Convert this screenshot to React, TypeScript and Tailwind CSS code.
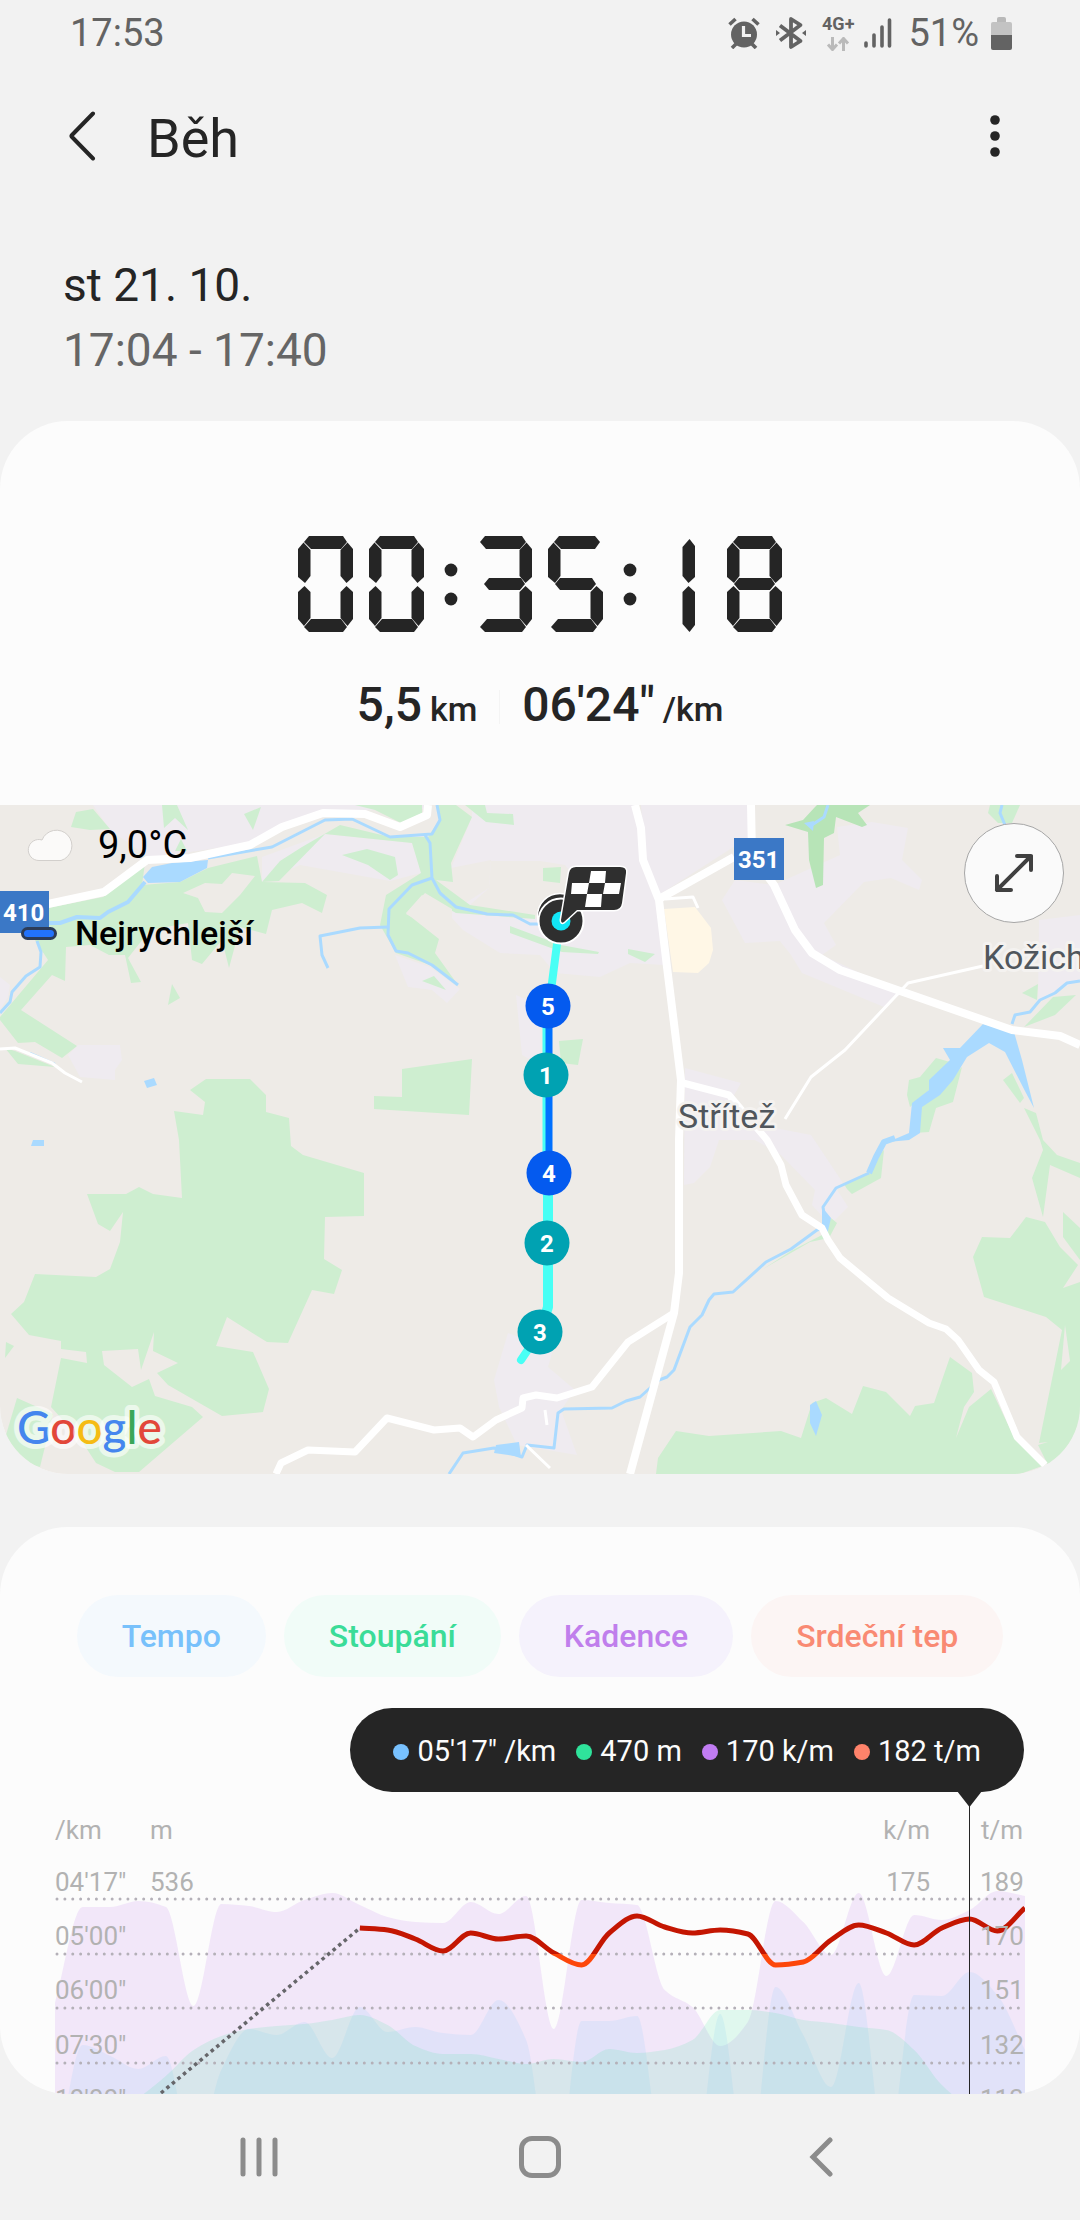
import type { ReactNode } from 'react';

const STEP = 970 / 35;
const CHART_LEFT = 55;

// Vertical positions of the samples, one every STEP units
const CADENCE = [
  203, 107, 107, 101, 107, 206, 104, 106, 112, 100, 93, 105, 117, 122, 123, 102, 114, 96, 229, 100, 103, 105, 190, 207,
  246, 222, 101, 122, 155, 93, 176, 115, 120, 110, 91, 96,
];
const PACE = [
  370, 245, 256, 269, 256, 360, 270, 229, 235, 222, 258, 207, 232, 227, 233, 235, 200, 240, 400, 221, 221, 216, 370, 380,
  214, 380, 187, 235, 287, 183, 360, 195, 196, 172, 195, 250,
];
const ELEVATION = [
  340, 330, 315, 298, 276, 250, 236, 229, 226, 224, 220, 215, 225, 246, 254, 254, 259, 264, 259, 262, 249, 253, 250, 240,
  210, 210, 213, 220, 223, 227, 230, 250, 285, 307, 320, 320,
];
const HEART_RATE = [
  128, 130, 139, 151, 133, 139, 136, 153, 165, 133, 116, 127, 133, 130, 134, 165, 162, 140, 125, 133, 145, 128, 119, 131,
  108,
];

// Monotone cubic curve through evenly spaced samples
function curve(values: number[], startX: number) {
  const slopes = values.map((v, i) => {
    if (i === 0 || i === values.length - 1) return 0;
    const a = v - values[i - 1];
    const b = values[i + 1] - v;
    return a * b <= 0 ? 0 : (2 * a * b) / (a + b);
  });
  slopes[0] = values[1] - values[0];
  slopes[values.length - 1] = values[values.length - 1] - values[values.length - 2];
  let d = `M${startX} ${values[0]}`;
  for (let i = 1; i < values.length; i++) {
    const x0 = startX + (i - 1) * STEP;
    const x1 = startX + i * STEP;
    d += `C${x0 + STEP / 3} ${values[i - 1] + slopes[i - 1] / 3} ${x1 - STEP / 3} ${values[i] - slopes[i] / 3} ${x1} ${values[i]}`;
  }
  return d;
}

const area = (values: number[]) => `${curve(values, CHART_LEFT)}V420H${CHART_LEFT}Z`;

// Capitals are the longer forms used where the neighbouring segment is off
const SEGMENTS: Record<string, string> = {
  a: '6,6 11,0 45,0 49,6 43,13 13,13',
  b: '49.5,6.5 55,13 55,41 48.5,47 42.5,40 42.5,14',
  c: '48.5,50 55,56 55,83 49.5,90 42.5,82 42.5,56',
  d: '6,91 13,83 43,83 49,91 45,96 11,96',
  e: '6.5,50 12.5,56 12.5,82 6,90 0,83 0,56',
  f: '5.5,6.5 12.5,14 12.5,40 7,47 0,41 0,13',
  g: '7,48 12,42 44,42 48,48 43,54 12,54',
  A: '3,6 8,0 45,0 49,6 43,13 9,13',
  R: '6,6 11,0 47,0 52,6 47,13 13,13',
  B: '49.5,3 55,10 55,41 48.5,47 42.5,40 42.5,11',
  C: '48.5,50 55,56 55,89 49.5,96 42.5,88 42.5,56',
  D: '3,91 10,83 43,83 49,91 45,96 8,96',
};

const DIGITS: { x: number; on: string }[] = [
  { x: 0, on: 'abcdef' },
  { x: 71, on: 'abcdef' },
  { x: 179, on: 'AbcDg' },
  { x: 250, on: 'RcDfg' },
  { x: 342, on: 'BC' },
  { x: 429, on: 'abcdefg' },
];

function StatusBar() {
  return (
    <div className="flex h-[66px] items-center justify-between pl-[70px] pr-[68px] text-[38px] leading-none text-[#636363]">
      <span>17:53</span>
      <div className="flex items-center">
        <svg className="h-8 w-8" viewBox="0 0 32 32" fill="none" aria-hidden="true">
          <circle cx="16" cy="17.5" r="13" fill="#636363" />
          <path d="M1.5 7.5 7.5 2M30.5 7.5 24.5 2M4 31l4-4M28 31l-4-4" stroke="#636363" strokeWidth="3.6" />
          <path d="M15.5 9v9.5h7.5" stroke="#f2f2f2" strokeWidth="3.2" />
        </svg>
        <svg className="ml-4 h-[34px] w-[30px]" viewBox="0 0 30 34" fill="none" aria-hidden="true">
          <path d="M4 9.5 24.5 25 15 31V3l9.5 6L4 24.5" stroke="#636363" strokeWidth="3.8" strokeLinejoin="round" />
          <path d="M0 14l4 3-4 3ZM30 14l-4 3 4 3Z" fill="#636363" />
        </svg>
        <span className="ml-4 flex flex-col items-center gap-1">
          <span className="text-lg font-bold leading-none">4G+</span>
          <svg className="h-3.5 w-6" viewBox="0 0 24 14" fill="none" stroke="#bababa" strokeWidth="3" aria-hidden="true">
            <path d="M6.5 0v12M2 7.5l4.500 5 4.500-5M17.500 14V2M13 6.500l4.500-5 4.500 5" />
          </svg>
        </span>
        <svg className="ml-2.5 h-[30px] w-[28px]" viewBox="0 0 28 30" stroke="#636363" strokeWidth="3.6" strokeLinecap="round" aria-hidden="true">
          <path d="M2 25v3M10 17v11M18 9v19M25.500 2v26" />
        </svg>
        <span className="ml-4">51%</span>
        <svg className="ml-3 h-[33px] w-[21px]" viewBox="0 0 21 33" aria-hidden="true">
          <path d="M6 2a2 2 0 0 1 2-2h5a2 2 0 0 1 2 2v3H6Z" fill="#b9b9b9" />
          <path d="M0 7a2 2 0 0 1 2-2h17a2 2 0 0 1 2 2v11H0Z" fill="#c3c3c3" />
          <path d="M0 18h21v13a2 2 0 0 1-2 2H2a2 2 0 0 1-2-2Z" fill="#636363" />
        </svg>
      </div>
    </div>
  );
}

function Header() {
  return (
    <header className="flex h-[140px] items-center pl-[60px] pr-[78px] text-[#252525]">
      <button type="button" aria-label="Zpět" className="flex h-16 w-11 items-center justify-center">
        <svg className="h-[50px] w-[28px]" viewBox="0 0 28 50" fill="none" stroke="#252525" strokeWidth="4" strokeLinecap="round" strokeLinejoin="round">
          <path d="M25 2.500 4 24q-1 1 0 2L25 47.500" />
        </svg>
      </button>
      <h1 className="grow pl-[43px] pt-1.5 text-[54px] leading-none">Běh</h1>
      <button type="button" aria-label="Další možnosti" className="flex h-16 w-[14px] items-center justify-center">
        <svg className="h-[44px] w-[10px]" viewBox="0 0 10 44" fill="#252525">
          <circle cx="5" cy="6" r="4.8" />
          <circle cx="5" cy="22" r="4.8" />
          <circle cx="5" cy="38" r="4.8" />
        </svg>
      </button>
    </header>
  );
}

function Timer() {
  return (
    <svg className="h-24 w-[484px]" viewBox="0 0 484 96" fill="#252525" role="img" aria-label="00:35:18">
      {DIGITS.map((digit) => (
        <g key={digit.x} transform={`translate(${digit.x} 0)`}>
          {digit.on.split('').map((s) => (
            <polygon key={s} points={SEGMENTS[s]} />
          ))}
        </g>
      ))}
      {[153, 332].map((x) => (
        <g key={x}>
          <circle cx={x} cy="34" r="6.4" />
          <circle cx={x} cy="63" r="6.4" />
        </g>
      ))}
    </svg>
  );
}

function Split({ x, y, fill, children }: { x: number; y: number; fill: string; children: ReactNode }) {
  return (
    <g>
      <circle cx={x} cy={y} r="22.5" fill={fill} />
      <text x={x} y={y + 9} textAnchor="middle" fontSize="24" fontWeight="700" fill="#fff">
        {children}
      </text>
    </g>
  );
}

function MapDrawing() {
  return (
    <svg className="h-full w-full" viewBox="0 0 1080 669" preserveAspectRatio="xMidYMid slice" role="img" aria-label="Mapa trasy">
      <rect width="1080" height="669" fill="#eeebe7" />

      {/* Built-up areas */}
      <g fill="#efebf0">
        <path d="M93 0 110 25 150 53 250 38 282 20 323 6 427 4V0Z" />
        <path d="M262 52 325 29 412 38 421 68 390 76 300 60 262 77Z" />
        <path d="M472 0H635L641 23 643 55 659 95 664 160 630 158 600 172 555 168 540 150 500 148 463 125 440 100 467 97 489 83 491 55 451 63 472 12Z" />
        <path d="M641 0H751L752 30 659 90 645 55Z" />
        <path d="M837 22 872 17 908 23 902 55 922 75 919 85 891 73 864 77 824 118 836 140 822 150 902 188 884 202 802 168 791 150 780 136 745 138 722 95 735 75 774 80 840 50Z" />
        <path d="M685 263 741 278 733 292 760 320 811 330 843 378 836 383 848 402 830 420 812 400 815 385 781 350 755 335 719 335 710 362 694 378 684 380Z" />
        <path d="M1039 115 1080 110V175L1038 195Z" />
        <path d="M68 250 78 240H120L122 255 115 265V275L80 272Z" />
        <path d="M395 150 430 162 460 184 447 198 432 185 408 182Z" />
        <path d="M0 172 10 180 8 192 0 205Z" />
        <path d="M508 528 553 545 548 562 575 585 561 605 577 650 517 640 499 602 494 575Z" />
        <path d="M516 190 540 200V260L522 250Z" />
      </g>
      <path d="M491 56H540L565 60 590 90 560 118 535 113 470 100 489 83Z" fill="#eeebe7" />

      {/* Woods and meadows */}
      <g fill="#ceeed0">
        <path d="M71 22 76 7 93 4 110 24 90 25Z" />
        <path d="M162 0H177L188 25 175 13 164 23Z" />
        <path d="M244 9 261 2 253 25Z" />
        <path d="M355 0H422V8L401 18 375 5Z" />
        <path d="M175 46 181 34 187 46Z" />
        <path d="M48 103 103 92 138 65 145 58 142 80 180 77 208 63 257 51 262 77 305 78 327 90 322 108 302 98 272 105 266 129 240 122 229 163 222 135 202 159 192 155 188 118 150 125 128 153 141 177 131 178 125 150 109 150 90 140 66 142 65 176 52 170 21 205 77 241 62 253 35 237 18 238 0 215V212L48 155 35 135 36 120Z" />
        <path d="M262 77 280 56 302 42 340 20 390 32 428 32 440 14 437 0H456L472 12 451 58 453 77 436 75 470 100 535 110V114L456 108 422 90 406 108 439 134 435 148 458 180 430 160 396 148 380 120 386 90 421 68 412 38 325 29 279 76Z" />
        <path d="M342 50 367 44 395 52 398 70 390 75 368 60Z" />
        <path d="M465 0H485L487 8 513 9 514 20 486 17Z" />
        <path d="M172 179 180 193 168 200Z" />
        <path d="M422 176 434 171 446 185Z" />
        <path d="M5 243 15 246 55 262 18 259Z" />
        <path d="M402 264 472 254 469 310 374 304V291L402 292Z" />
        <path d="M190 285 206 274H250L266 290V307L289 313 291 341 303 350 364 368V411L325 412 324 454 342 465 334 489 312 485 288 538 267 537 227 512 216 541 253 547 269 584 263 607 222 611 168 580 157 568 178 558 153 546 154 527 141 565 138 544 102 546 104 560 132 582 149 574 155 591 192 602 203 612 139 667H115L96 658 81 635 51 602 61 553 87 558 86 547 61 544V536L29 530 11 509 24 497 35 469 96 472 110 464 120 437 123 407 110 426 98 419 87 389H126L139 382 153 389 182 393 179 335 174 306 203 310 205 297Z" />
        <path d="M6 537 14 541 5 553Z" />
        <path d="M17 593 53 609 40 662 0 650Z" />
        <path d="M988 8 990 0H1020L1012 18H998Z" />
        <path d="M543 63 561 62 560 78 543 76Z" />
        <path d="M510 128V121L561 140 599 147 598 149 562 147Z" />
        <path d="M628 144 655 149 645 157 628 149Z" />
        <path d="M559 236 583 234 578 260 561 258Z" />
        <path d="M1022 188 1038 179 1037 195Z" />
        <path d="M1024 222 1053 192 1076 190 1055 210Z" />
        <path d="M936 253 950 257 929 285 910 302 907 290 909 275 920 272Z" />
        <path d="M962 262 953 297 936 303 929 327 914 328 922 300Z" />
        <path d="M1003 275 1012 268 1024 293 1020 298Z" />
        <path d="M1024 303 1036 308 1043 335 1057 350 1080 358V373L1050 360 1043 412 1032 373 1043 345 1040 335Z" />
        <path d="M847 384 844 379 869 368 876 352 884 345 881 373 852 389Z" />
        <path d="M831 413 837 418 829 433 810 437 770 460 760 466 791 446 822 430Z" />
        <path d="M982 432 1010 433 1026 412 1045 417 1060 442 1078 460 1063 483 1080 477V669H1030L1048 660 1038 640 1048 637 1039 638 1062 525 1046 512 984 492 973 452Z" />
        <path d="M1063 407 1080 423V455L1063 432Z" />
        <path d="M656 669 658 653 676 626 709 631 781 626 801 633 812 598 826 593 852 609 863 581 886 587 910 611 915 601 934 598 950 552 972 568 974 587 964 602 956 633 969 602 991 584 1014 632 1045 660 1020 669Z" />
      </g>
      <g fill="#eeebe7">
        <path d="M183 88 205 78 222 79 232 68 255 71 240 90 222 108 205 107 198 93Z" />
        <path d="M1065 520 1070 556 1061 565Z" />
        <path d="M425 88 452 104 452 120 430 122 406 109Z" />
      </g>
      <path d="M803 15 815 2 817 0H870L858 8 867 20 862 22 836 12 834 28 824 33 823 80 816 83 809 55 808 27 785 20Z" fill="#b7e4b7" />
      <path d="M664 104 695 102 711 123 713 145 709 158 698 168 673 167Z" fill="#fff7e6" />

      {/* Lakes and streams */}
      <g fill="#aadaff">
        <path d="M152 62 172 58 208 55 207 63 180 77 148 78 143 72Z" />
        <path d="M144 276 154 273 157 280 147 283Z" />
        <path d="M33 335H44V341H31Z" />
        <path d="M983 219 1014 227 1022 255 1034 303 1026 288 1005 247 989 238 967 252 953 275 940 290 922 302 920 328 909 335 888 337 909 328 912 298 929 285V275L950 255 943 243H960Z" />
        <path d="M496 640 519 637 521 652 494 648Z" />
        <path d="M816 596 822 610 816 631 810 618V600Z" />
        <path d="M822 402 831 413 827 430 822 422Z" />
        <path d="M804 18 814 16 813 26Z" />
      </g>
      <g fill="none" stroke="#aadaff" strokeWidth="3" strokeLinejoin="round">
        <path d="M208 53 272 42 325 15 352 14 390 32 432 29 440 15 437 0" />
        <path d="M425 30 430 38 432 73 440 88 456 102 487 109 513 110 530 119H545" />
        <path d="M432 73 412 80 389 104 388 130 396 146 408 148 432 160 458 180" />
        <path d="M388 122 360 123 320 131 322 150 328 163" />
        <path d="M145 77 128 97 108 107 100 113 77 112 60 118H45" strokeWidth="4" />
        <path d="M37 136 41 147 40 162 26 171 12 187 10 197 0 208" />
        <path d="M30 248 55 259" strokeWidth="2" />
        <path d="M1012 219 1015 210 1030 207 1040 195 1055 188 1067 178 1080 176" />
        <path d="M1002 0 1000 8 1005 20M812 20 824 12 828 0" />
        <path d="M895 333 884 337 876 352 869 368" strokeWidth="6" />
        <path d="M869 368 836 383 823 402 826 422 817 425 791 444 766 457 733 487 714 489 709 495 702 510 690 522 674 565 667 572 659 575 640 592 626 596 612 603 564 604 558 608 554 643 527 640 522 652 494 643 463 648 449 669" />
      </g>

      {/* Roads */}
      <g fill="none" stroke="#fff" strokeWidth="8" strokeLinejoin="round">
        <path d="M428 0 427 10 400 22 365 9 323 8 282 22 250 40 190 53 147 55 104 87 48 99 0 104" />
        <path d="M635 0 641 23 643 55 659 95 667 162 681 275 679 335V468L674 508 630 669" />
        <path d="M751 0 752 50 774 80 795 125 812 148 840 165 1012 225 1060 231 1080 240" />
        <path d="M659 94 734 52" />
        <path d="M683 278 729 290 767 335 781 360 786 380 802 410 822 423 828 435 840 453 888 493 929 518 946 524 958 535 979 565 994 577 1017 632 1045 660" strokeWidth="7" />
        <path d="M674 508 628 537 592 582 557 593 536 590 523 593 522 603 496 615 473 632 460 623 434 625 387 613 355 647 308 645 281 658 276 669" strokeWidth="7" />
        <path d="M0 244 15 243 52 258 65 268 82 277M665 94 693 92 698 103M983 161 908 178 845 245 811 272 785 314M526 640 550 663M545 605 547 620" strokeWidth="3" />
      </g>

      {/* Town names and road shields */}
      <g fontSize="34" fill="#50565c" stroke="#f4f2f0" strokeWidth="6" strokeLinejoin="round" paintOrder="stroke">
        <text x="678" y="323">Střítež</text>
        <text x="983" y="164">Kožich</text>
      </g>
      <g fontSize="24" fontWeight="700" fill="#fff">
        <rect y="86" width="49" height="42" fill="#3b78c6" />
        <text x="3" y="116">410</text>
        <rect x="734" y="33" width="50" height="42" fill="#3b78c6" />
        <text x="738" y="63">351</text>
      </g>

      {/* Route */}
      <g fill="none" strokeLinecap="round" strokeLinejoin="round">
        <path d="M560 116 549 201" stroke="#48fff5" strokeWidth="8" />
        <path d="M546 201V368" stroke="#48fff5" strokeWidth="7" />
        <path d="M548 368V502L540 527" stroke="#48fff5" strokeWidth="10" />
        <path d="M521 555 540 527" stroke="#48fff5" strokeWidth="8" />
        <path d="M549 201V368" stroke="#0070ff" strokeWidth="7" />
      </g>
      <Split x={548} y={201} fill="#045aef">5</Split>
      <Split x={546} y={270} fill="#00a2b2">1</Split>
      <Split x={549} y={368} fill="#045aef">4</Split>
      <Split x={547} y={438} fill="#00a2b2">2</Split>
      <Split x={540} y={527} fill="#00a2b2">3</Split>

      {/* Start and finish */}
      <circle cx="560" cy="111" r="22.5" fill="#2f2f2f" stroke="#fff" strokeWidth="1.5" />
      <circle cx="561" cy="116" r="22.5" fill="#2f2f2f" stroke="#fff" strokeWidth="2" />
      <circle cx="561" cy="116" r="9.5" fill="#12e6f7" />
      <path
        d="M576 62H620Q627 62 626 68L622 98Q621 105 614 105H577L564 117Q561 119 561 115L569 68Q570 62 576 62Z"
        fill="#2f2f2f"
        stroke="#fff"
        strokeWidth="3"
        strokeLinejoin="round"
        paintOrder="stroke"
      />
      <path d="M591 66H606L605 78H589ZM572 78H589L587 89H571ZM605 78H621L619 89H603ZM587 89H602L601 102H585Z" fill="#fff" />

      <text
        x="17"
        y="639"
        fontSize="46"
        fontFamily="Lato, sans-serif"
        fontWeight="500"
        stroke="#ffffff"
        strokeOpacity="0.6"
        strokeWidth="10"
        strokeLinejoin="round"
        paintOrder="stroke"
        fill="#4586ee"
      >
        G<tspan fill="#e2473a">o</tspan>
        <tspan fill="#f5bc14">o</tspan>
        <tspan>g</tspan>
        <tspan fill="#3ba658">l</tspan>
        <tspan fill="#e2473a">e</tspan>
      </text>
    </svg>
  );
}

function RouteMap() {
  return (
    <div className="relative h-[669px] overflow-hidden rounded-b-[68px]">
      <MapDrawing />
      <div className="absolute left-0 top-[18px] flex flex-col gap-11 text-black">
        <div className="flex items-center gap-6 pl-[27px] text-[38px] leading-[44px]">
          <svg className="h-[34px] w-[47px]" viewBox="0 0 47 34" aria-hidden="true">
            <path
              d="M12 32.500A10.500 10.500 0 1 1 15 12 15.500 15.500 0 1 1 34 32.500Z"
              fill="#fbfaf9"
              stroke="#d2cfcc"
              strokeWidth="1"
            />
          </svg>
          <span>9,0°C</span>
        </div>
        <div className="flex items-center gap-[18px] pl-[21px] text-[34px] font-medium leading-[44px]">
          <span className="h-[13px] w-9 rounded-full border-[3px] border-[#2c3c58] bg-[#2272fb]" />
          <span>Nejrychlejší</span>
        </div>
      </div>
      <button
        type="button"
        aria-label="Zvětšit mapu"
        className="absolute right-4 top-[18px] flex h-[100px] w-[100px] items-center justify-center rounded-full border border-[#a5a5a5] bg-[#fafafa]"
      >
        <svg className="h-10 w-10" viewBox="0 0 40 40" fill="none" stroke="#404040" strokeWidth="4" strokeLinecap="round" strokeLinejoin="round">
          <path d="M3 37 37 3M23 3H37V17M3 23V37H17" />
        </svg>
      </button>
    </div>
  );
}

const CHIPS = [
  { label: 'Tempo', color: 'bg-[#f4f9fd] text-[#78c1fb]' },
  { label: 'Stoupání', color: 'bg-[#f1fcf8] text-[#3bdc98]' },
  { label: 'Kadence', color: 'bg-[#f5f2fc] text-[#c07fec]' },
  { label: 'Srdeční tep', color: 'bg-[#fcf5f4] text-[#f98a73]' },
];

const READINGS = [
  { value: '05\'17" /km', color: 'bg-[#78c1fe]' },
  { value: '470 m', color: 'bg-[#2fe39b]' },
  { value: '170 k/m', color: 'bg-[#c17cf3]' },
  { value: '182 t/m', color: 'bg-[#ff836b]' },
];

const PACE_LABELS = ['04\'17"', '05\'00"', '06\'00"', '07\'30"', '10\'00"'];
const PULSE_LABELS = ['189', '170', '151', '132', '113'];
const LABEL_Y = [91, 145, 199, 254, 308];

function Chart() {
  const pulse = curve(HEART_RATE, CHART_LEFT + 11 * STEP);
  return (
    <svg className="h-[302px] w-full" viewBox="0 -8 1080 302" preserveAspectRatio="xMidYMin slice" role="img" aria-label="Graf průběhu běhu">
      <defs>
        <clipPath id="zone-high">
          <rect x="0" y="0" width="1025" height="154" />
        </clipPath>
        <clipPath id="zone-mid">
          <rect x="0" y="154" width="1025" height="140" />
        </clipPath>
      </defs>
      <path d={area(CADENCE)} fill="#c07fec" fillOpacity="0.16" />
      <path d={area(PACE)} fill="#7cc4ff" fillOpacity="0.14" />
      <path d={area(ELEVATION)} fill="#36e49c" fillOpacity="0.14" />
      <g stroke="#b4b0b8" strokeWidth="3" strokeLinecap="round" strokeDasharray="0 7.88">
        {[99, 154, 208, 263].map((y) => (
          <path key={y} d={`M57 ${y}H1024`} />
        ))}
      </g>
      <path d="M161 293 360 128" stroke="#66666a" strokeWidth="3.5" strokeDasharray="3.5 3.7" />
      <g fill="none" strokeWidth="5">
        <path d={pulse} stroke="#c41602" clipPath="url(#zone-high)" />
        <path d={pulse} stroke="#fd470b" clipPath="url(#zone-mid)" />
      </g>
      <g fontSize="26" fill="#b2b2b2">
        <text x="55" y="39">/km</text>
        <text x="150" y="39">m</text>
        <text x="930" y="39" textAnchor="end">k/m</text>
        <text x="981" y="39">t/m</text>
        <text x="150" y="91">536</text>
        <text x="930" y="91" textAnchor="end">175</text>
        {LABEL_Y.map((y, i) => (
          <g key={y}>
            <text x="55" y={y}>{PACE_LABELS[i]}</text>
            <text x="980" y={y}>{PULSE_LABELS[i]}</text>
          </g>
        ))}
      </g>
      <path d="M957 -9H982L969.500 7Z" fill="#252525" />
      <path d="M969.500 6V294" stroke="#252525" />
    </svg>
  );
}

function NavBar() {
  return (
    <nav className="flex h-[126px] justify-center">
      <button type="button" aria-label="Poslední aplikace" className="flex w-[26%] items-center justify-center">
        <svg className="h-10 w-10" viewBox="0 0 40 40" stroke="#8c8c8c" strokeWidth="5" strokeLinecap="round">
          <path d="M4 3v34M20 3v34M36 3v34" />
        </svg>
      </button>
      <button type="button" aria-label="Domů" className="flex w-[26%] items-center justify-center">
        <span className="h-[42px] w-[42px] rounded-[13px] border-[5px] border-[#8c8c8c]" />
      </button>
      <button type="button" aria-label="Zpět" className="flex w-[26%] items-center justify-center">
        <svg className="h-10 w-6" viewBox="0 0 24 40" fill="none" stroke="#8c8c8c" strokeWidth="5" strokeLinecap="round">
          <path d="M21 3 4 20 21 37" />
        </svg>
      </button>
    </nav>
  );
}

export default function App() {
  return (
    <div className="min-h-screen bg-[#f2f2f2] font-['Roboto',sans-serif]">
      <StatusBar />
      <Header />

      <div className="px-[63px] pt-[47px] text-[46px] leading-[65px]">
        <p className="text-[#252525]">st 21. 10.</p>
        <p className="text-[#666666]">17:04 - 17:40</p>
      </div>

      <section className="mt-[38px] rounded-[68px] bg-[#fcfcfc]">
        <div className="flex flex-col items-center pb-[68px] pt-[115px] text-[#252525]">
          <Timer />
          <div className="mt-[45px] flex h-[60px] items-center font-medium">
            <p className="flex items-baseline gap-2 text-[48px] leading-[60px]">
              5,5 <span className="text-[34px]">km</span>
            </p>
            <span className="mx-[22px] h-[34px] w-px bg-[#f4f4f4]" />
            <p className="flex items-baseline gap-2 text-[48px] leading-[60px]">
              06'24" <span className="text-[34px]">/km</span>
            </p>
          </div>
        </div>
        <RouteMap />
      </section>

      <section className="mt-[53px] overflow-hidden rounded-[68px] bg-[#fcfcfc] pt-[68px]">
        <div className="flex justify-center gap-[18px]">
          {CHIPS.map((chip) => (
            <button key={chip.label} type="button" className={`h-[82px] rounded-full px-[45px] text-[32px] font-medium ${chip.color}`}>
              {chip.label}
            </button>
          ))}
        </div>
        <div className="mt-[31px] flex justify-end pr-14">
          <div className="flex h-[84px] items-center gap-5 rounded-full bg-[#252525] px-[43px] pt-1 text-[29px] text-[#fcfcfc]">
            {READINGS.map((reading) => (
              <span key={reading.value} className="flex items-center gap-2">
                <span className={`h-4 w-4 rounded-full ${reading.color}`} />
                {reading.value}
              </span>
            ))}
          </div>
        </div>
        <Chart />
      </section>

      <NavBar />
    </div>
  );
}
